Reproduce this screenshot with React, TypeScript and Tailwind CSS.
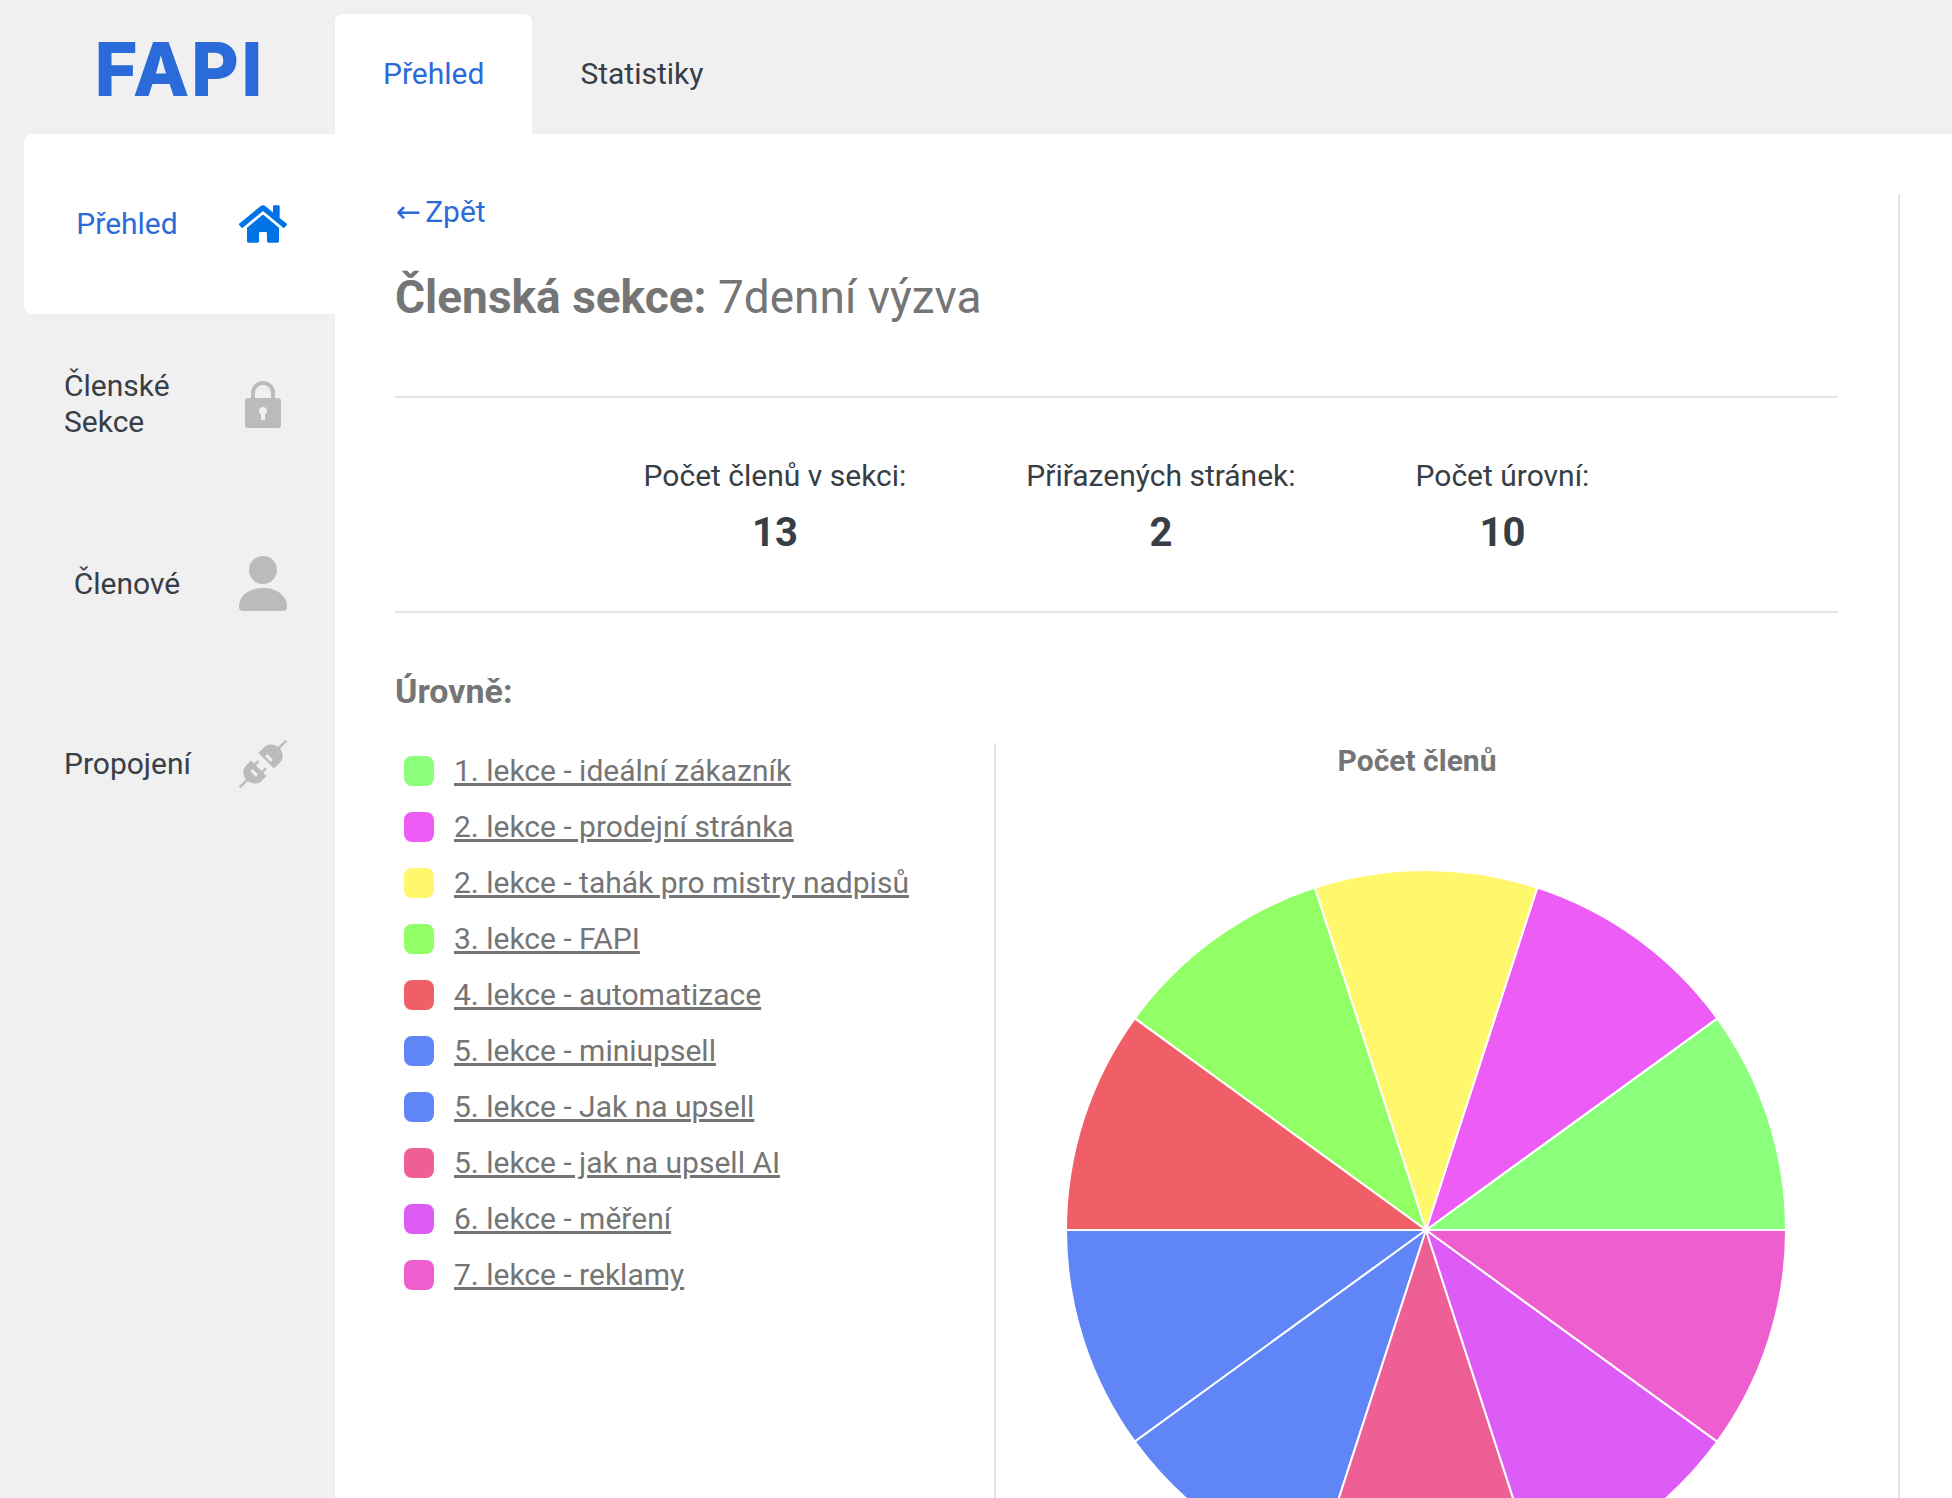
import { FaHome } from "react-icons/fa";

const levels = [
  { name: "1. lekce - ideální zákazník", color: "#8cff7c" },
  { name: "2. lekce - prodejní stránka", color: "#ee5cf6" },
  { name: "2. lekce - tahák pro mistry nadpisů", color: "#fff86c" },
  { name: "3. lekce - FAPI", color: "#92ff66" },
  { name: "4. lekce - automatizace", color: "#f05f68" },
  { name: "5. lekce - miniupsell", color: "#5f85f7" },
  { name: "5. lekce - Jak na upsell", color: "#5f85f7" },
  { name: "5. lekce - jak na upsell AI", color: "#ee5f96" },
  { name: "6. lekce - měření", color: "#dc5cf5" },
  { name: "7. lekce - reklamy", color: "#ee5ece" },
];

const stats = [
  { label: "Počet členů v sekci:", value: "13" },
  { label: "Přiřazených stránek:", value: "2" },
  { label: "Počet úrovní:", value: "10" },
];

function LockIcon() {
  return (
    <svg width="36" height="48" viewBox="0 0 36 48" fill="#bbbbbc">
      <path d="M6 18V13a12 12 0 0 1 24 0v5h-4v-5a8 8 0 0 0-16 0v5z" />
      <path
        fillRule="evenodd"
        d="M3 18h30a3 3 0 0 1 3 3v24a3 3 0 0 1-3 3H3a3 3 0 0 1-3-3V21a3 3 0 0 1 3-3zm15 9a4 4 0 0 0-2 7.4V40h4v-5.6A4 4 0 0 0 18 27z"
      />
    </svg>
  );
}

function UserIcon() {
  return (
    <svg width="48" height="56" viewBox="0 0 48 56" fill="#bbbbbc">
      <circle cx="24" cy="14" r="14" />
      <path d="M0 50c0-10 10-18 24-18s24 8 24 18v1a4 4 0 0 1-4 4H4a4 4 0 0 1-4-4z" />
    </svg>
  );
}

function PlugIcon() {
  return (
    <svg width="48" height="48" viewBox="0 0 48 48" fill="#bbbbbc" className="overflow-visible">
      <g transform="rotate(45 24 24)">
        <rect x="22.8" y="-9" width="2.4" height="11" />
        <path fillRule="evenodd" d="M13 19.5H35V11C35 5 29 1 24 1S13 5 13 11ZM20 14V17H28V14Z" />
        <rect x="17.5" y="25" width="2.6" height="6" />
        <rect x="27.9" y="25" width="2.6" height="6" />
        <path fillRule="evenodd" d="M13 30H35V37C35 43 29 47 24 47S13 43 13 37ZM20 35V38H28V35Z" />
        <rect x="22.8" y="46" width="2.4" height="11" />
      </g>
    </svg>
  );
}

function Pie() {
  const r = 360;
  const c = 362;
  return (
    <svg width="724" height="724" viewBox="0 0 724 724" className="shrink-0">
      {levels.map((l, i) => {
        const a0 = (i * 36 * Math.PI) / 180;
        const a1 = ((i + 1) * 36 * Math.PI) / 180;
        const d = `M${c} ${c}L${c + r * Math.cos(a0)} ${c - r * Math.sin(a0)}A${r} ${r} 0 0 0 ${c + r * Math.cos(a1)} ${c - r * Math.sin(a1)}Z`;
        return <path key={i} d={d} fill={l.color} stroke="#ffffff" strokeWidth="2" />;
      })}
    </svg>
  );
}

export default function App() {
  return (
    <div className="h-screen overflow-hidden bg-[#f0f0f1] font-['Roboto',sans-serif] text-[30px] leading-9 text-[#373e45]">
      <header className="flex h-[134px] items-end">
        <div className="flex h-[134px] w-[335px] items-center pt-[4px] pl-[95px]">
          <span className="font-['Inter',sans-serif] text-[72px] leading-none font-bold tracking-[3.5px] text-[#2b6bd9] [-webkit-text-stroke:2px_#2b6bd9]">
            FAPI
          </span>
        </div>
        <div className="flex h-[120px] items-center rounded-t-lg bg-white px-12 text-[#2b6bd9]">Přehled</div>
        <div className="flex h-[120px] items-center px-12">Statistiky</div>
      </header>

      <div className="flex">
        <aside className="w-[335px] shrink-0 pl-6">
          <div className="flex h-[180px] items-center rounded-l-lg bg-white pr-[48px] pl-[40px]">
            <span className="w-[126px] text-center text-[#2b6bd9]">Přehled</span>
            <span className="ml-auto flex w-12 justify-center text-[#0073e6]">
              <FaHome size={48} />
            </span>
          </div>
          <div className="flex h-[180px] items-center pr-[48px] pl-[40px]">
            <span className="w-[126px]">
              Členské
              <br />
              Sekce
            </span>
            <span className="ml-auto flex w-12 justify-center">
              <LockIcon />
            </span>
          </div>
          <div className="flex h-[180px] items-center pr-[48px] pl-[40px]">
            <span className="w-[126px] text-center">Členové</span>
            <span className="ml-auto flex w-12 justify-center">
              <UserIcon />
            </span>
          </div>
          <div className="flex h-[180px] items-center pr-[48px] pl-[40px]">
            <span className="w-[126px] text-center">Propojení</span>
            <span className="ml-auto flex w-12 justify-center">
              <PlugIcon />
            </span>
          </div>
        </aside>

        <main className="h-[1364px] min-w-0 flex-1 bg-white pt-[59px] pr-[52px]">
          <div className="h-full border-r-2 border-[#e6e6e6] px-[60px]">
            <a className="mt-px block text-[#2b6bd9]">
              <span className="mr-[4px] ml-px font-['DejaVu_Sans',sans-serif]">←</span>Zpět
            </a>
            <h1 className="mt-[41px] text-[46px] leading-[52px] text-[#757575]">
              <b className="font-bold">Členská sekce:</b> 7denní výzva
            </h1>

            <hr className="mt-[73px] border-t-2 border-[#e6e6e6]" />
            <div className="flex justify-center gap-[120px] pt-[60px]">
              {stats.map((s) => (
                <div key={s.label} className="text-center">
                  <div>{s.label}</div>
                  <div className="mt-[15px] text-[40px] leading-[48px] font-bold">{s.value}</div>
                </div>
              ))}
            </div>
            <hr className="mt-[54px] border-t-2 border-[#e6e6e6]" />

            <h2 className="mt-[60px] text-[34px] font-bold text-[#757575]">Úrovně:</h2>

            <div className="mt-[34px] flex">
              <ul className="flex w-[599px] shrink-0 flex-col gap-5 pt-[10px] pl-[9px]">
                {levels.map((l) => (
                  <li key={l.name} className="flex items-center gap-5">
                    <span className="size-[30px] rounded-lg" style={{ backgroundColor: l.color }} />
                    <a className="text-[#757575] underline">{l.name}</a>
                  </li>
                ))}
              </ul>
              <div className="flex min-w-0 flex-1 flex-col items-center border-l-2 border-[#e6e6e6]">
                <h3 className="font-bold text-[#757575]">Počet členů</h3>
                <div className="mt-[89px] ml-[17px] flex justify-center">
                  <Pie />
                </div>
              </div>
            </div>
          </div>
        </main>
      </div>
    </div>
  );
}
